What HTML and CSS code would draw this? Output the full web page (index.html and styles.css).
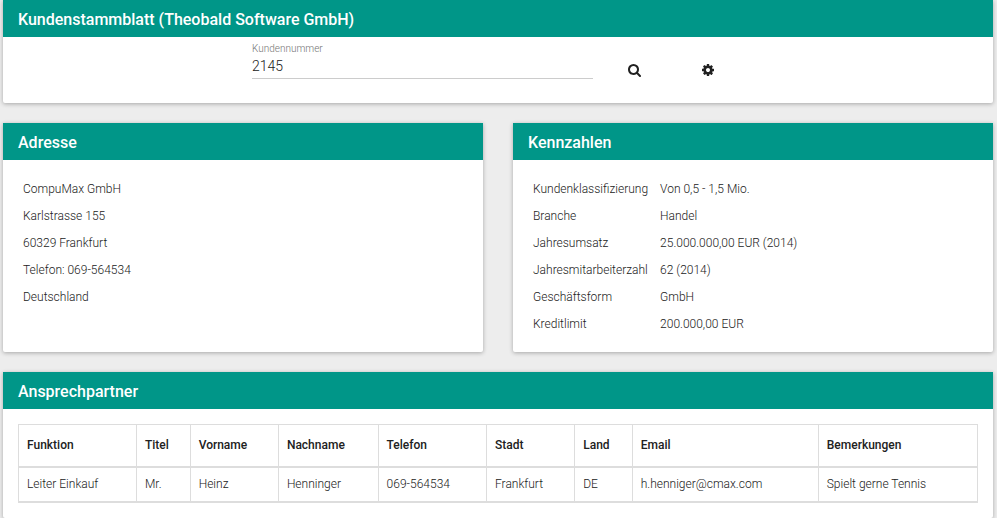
FILE: index.html
```html
<!DOCTYPE html>
<html lang="de">
<head>
<meta charset="utf-8">
<meta name="viewport" content="width=device-width, initial-scale=1">
<title>Kundenstammblatt</title>
<link rel="stylesheet" href="styles.css">
</head>
<body>
<main class="page">
  <section class="card">
    <h1 class="card-title">Kundenstammblatt (Theobald Software GmbH)</h1>
    <form class="search">
      <div class="field">
        <label for="customer">Kundennummer</label>
        <input id="customer" type="text" value="2145">
      </div>
      <button class="icon-button search-button" type="button" aria-label="Suchen">
        <svg viewBox="0 0 1664 1664" width="13" height="13" aria-hidden="true"><path d="M1152 704q0-185-131.500-316.500T704 256 387.500 387.500 256 704t131.500 316.500T704 1152t316.500-131.500T1152 704zm512 832q0 52-38 90t-90 38q-54 0-90-38l-343-342q-179 124-399 124-143 0-273.500-55.500t-225-150-150-225T0 704t55.500-273.500 150-225 225-150T704 0t273.500 55.500 225 150 150 225T1408 704q0 220-124 399l343 343q37 37 37 90z"/></svg>
      </button>
      <button class="icon-button" type="button" aria-label="Einstellungen">
        <svg viewBox="0 0 1536 1536" width="12" height="12" aria-hidden="true"><path d="M1024 768q0-106-75-181t-181-75-181 75-75 181 75 181 181 75 181-75 75-181zm512-109v222q0 12-8 23t-20 13l-185 28q-19 54-39 91 35 50 107 138 10 12 10 25t-9 23q-27 37-99 108t-94 71q-12 0-26-9l-138-108q-44 23-91 38-16 136-29 186-7 28-36 28H657q-14 0-24.500-8.500T621 1506l-28-184q-49-16-90-37l-141 107q-10 9-25 9-14 0-25-11-126-114-165-168-7-10-7-23 0-12 8-23 15-21 51-66.500t54-70.500q-27-50-41-99L29 913q-13-2-21-12.500T0 877V655q0-12 8-23t19-13l186-28q14-46 39-92-40-57-107-138-10-12-10-24 0-10 9-23 26-36 98.500-107.500T337 135q13 0 26 10l138 107q44-23 91-38 16-136 29-186 7-28 36-28h222q14 0 24.500 8.500T915 30l28 184q49 16 90 37l142-107q9-9 24-9 13 0 25 10 129 119 165 170 7 8 7 22 0 12-8 23-15 21-51 66.500t-54 70.500q26 50 41 98l183 28q13 2 21 12.500t8 23.500z"/></svg>
      </button>
    </form>
  </section>

  <div class="columns">
    <section class="card">
      <h2 class="card-title">Adresse</h2>
      <address class="details">
        <div>CompuMax GmbH</div>
        <div>Karlstrasse 155</div>
        <div>60329 Frankfurt</div>
        <div>Telefon: 069-564534</div>
        <div>Deutschland</div>
      </address>
    </section>
    <section class="card">
      <h2 class="card-title">Kennzahlen</h2>
      <dl class="details figures">
        <dt>Kundenklassifizierung</dt><dd>Von 0,5 - 1,5 Mio.</dd>
        <dt>Branche</dt><dd>Handel</dd>
        <dt>Jahresumsatz</dt><dd>25.000.000,00 EUR (2014)</dd>
        <dt>Jahresmitarbeiterzahl</dt><dd>62 (2014)</dd>
        <dt>Geschäftsform</dt><dd>GmbH</dd>
        <dt>Kreditlimit</dt><dd>200.000,00 EUR</dd>
      </dl>
    </section>
  </div>

  <section class="card">
    <h2 class="card-title">Ansprechpartner</h2>
    <div class="table-wrap">
      <table class="contacts">
        <colgroup>
          <col class="c-function"><col class="c-title"><col class="c-first"><col class="c-last"><col class="c-phone"><col class="c-city"><col class="c-country"><col class="c-email"><col>
        </colgroup>
        <thead>
          <tr><th scope="col">Funktion</th><th scope="col">Titel</th><th scope="col">Vorname</th><th scope="col">Nachname</th><th scope="col">Telefon</th><th scope="col">Stadt</th><th scope="col">Land</th><th scope="col">Email</th><th scope="col">Bemerkungen</th></tr>
        </thead>
        <tbody>
          <tr><td>Leiter Einkauf</td><td>Mr.</td><td>Heinz</td><td>Henninger</td><td>069-564534</td><td>Frankfurt</td><td>DE</td><td>h.henniger@cmax.com</td><td>Spielt gerne Tennis</td></tr>
        </tbody>
      </table>
    </div>
  </section>
</main>
</body>
</html>
```
FILE: styles.css
```css
* {
  box-sizing: border-box;
}

body {
  margin: 0;
  background: #ededed;
  color: #212121;
  font-family: Roboto, "Liberation Sans", sans-serif;
  font-size: 12px;
  font-weight: 300;
}

.page {
  display: flex;
  flex-direction: column;
  gap: 20px;
  padding: 0 4px 1px 3px;
}

.card {
  background: #fff;
  border-radius: 0 0 2px 2px;
  box-shadow: 0 1px 4px rgba(0, 0, 0, 0.3);
}

.card-title {
  margin: 0;
  padding: 2px 15px 0;
  background: #009688;
  color: #fff;
  font-size: 16px;
  font-weight: 500;
  line-height: 35px;
}

.columns {
  display: grid;
  grid-template-columns: 1fr 1fr;
  gap: 30px;
}

.search {
  display: grid;
  grid-template-columns: 249fr 341fr 5fr 73fr 73fr 249fr;
  align-items: start;
  padding: 5px 0 14px;
}

.field {
  grid-column: 2;
  display: flex;
  flex-direction: column;
}

.field label {
  color: #757575;
  font-size: 10px;
  line-height: 13px;
}

.field input {
  width: 100%;
  height: 24px;
  padding: 0 0 2px;
  border: 0;
  border-bottom: 1px solid #ccc;
  border-radius: 0;
  outline: 0;
  background: none;
  color: #212121;
  font: inherit;
  font-size: 14px;
}

.icon-button {
  display: flex;
  align-items: center;
  justify-content: center;
  height: 36px;
  margin-top: 10px;
  padding: 0;
  border: 0;
  background: none;
  color: #212121;
  cursor: pointer;
}

.search-button {
  grid-column: 4;
}

.icon-button svg {
  fill: currentColor;
}

.search {
  padding-bottom: 15px;
}

.details {
  margin: 0;
  padding: 16px 20px 14px;
  font-style: normal;
  line-height: 27px;
}

.figures {
  display: grid;
  grid-template-columns: max-content 1fr;
  column-gap: 12px;
}

.figures dd {
  margin: 0;
}

.table-wrap {
  padding: 15px;
}

.contacts {
  width: 100%;
  border-collapse: collapse;
  table-layout: fixed;
  line-height: 17px;
}

.contacts th,
.contacts td {
  padding: 8px;
  border: 1px solid #ddd;
  border-bottom-width: 2px;
  text-align: left;
}

.contacts th {
  padding: 12px 8px;
  font-weight: 500;
}

.c-function { width: 12.3%; }
.c-title { width: 5.6%; }
.c-first { width: 9.2%; }
.c-last { width: 10.4%; }
.c-phone { width: 11.3%; }
.c-city { width: 9.2%; }
.c-country { width: 6%; }
.c-email { width: 19.4%; }
```
